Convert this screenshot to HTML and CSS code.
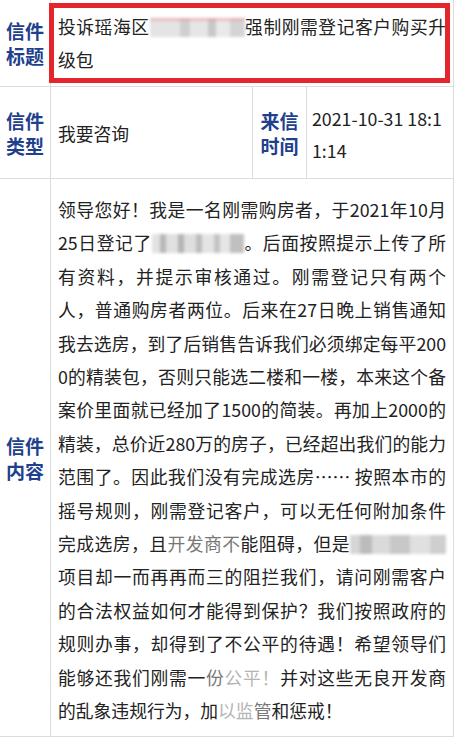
FILE: index.html
```html
<!DOCTYPE html>
<html lang="zh">
<head>
<meta charset="utf-8">
<link rel="stylesheet" href="styles.css">
</head>
<body>
<div class="letter">
  <div class="lab">信件<br>标题</div>
  <div class="cell title span3">
    <div class="mark"></div>
    <span class="ln">投诉瑶海区<span class="blur b1"></span>强制刚需登记客户购买升</span>级包
  </div>

  <div class="lab">信件<br>类型</div>
  <div class="cell mid">我要咨询</div>
  <div class="lab">来信<br>时间</div>
  <div class="cell mid date">2021-10-31 18:1<br>1:14</div>

  <div class="lab">信件<br>内容</div>
  <div class="cell body span3">
    <span class="ln">领导您好！我是一名刚需购房者，于2021年10月</span>
    <span class="ln">25日登记了<span class="blur b2"></span>。后面按照提示上传了所</span>
    <span class="ln">有资料，并提示审核通过。刚需登记只有两个</span>
    <span class="ln">人，普通购房者两位。后来在27日晚上销售通知</span>
    <span class="ln">我去选房，到了后销售告诉我们必须绑定每平200</span>
    <span class="ln">0的精装包，否则只能选二楼和一楼，本来这个备</span>
    <span class="ln">案价里面就已经加了1500的简装。再加上2000的</span>
    <span class="ln">精装，总价近280万的房子，已经超出我们的能力</span>
    <span class="ln">范围了。因此我们没有完成选房…… 按照本市的</span>
    <span class="ln">摇号规则，刚需登记客户，可以无任何附加条件</span>
    <span class="ln">完成选房，且<span class="f2">开发商不</span>能阻碍，但是<span class="blur b3"></span></span>
    <span class="ln">项目却一而再再而三的阻拦我们，请问刚需客户</span>
    <span class="ln">的合法权益如何才能得到保护？我们按照政府的</span>
    <span class="ln">规则办事，却得到了不公平的待遇！希望领导们</span>
    <span class="ln">能够还我们刚需一<span class="f2">份</span><span class="f1">公平！</span>并对这些无良开发商</span>
    <span class="last">的乱象违规行为，加<span class="f1">以监</span><span class="f2">管</span>和惩戒！</span>
  </div>
</div>
</body>
</html>
```

FILE: styles.css
```css
html, body {
  margin: 0;
  padding: 0;
  background: #ffffff;
}

body {
  font-family: "Noto Sans CJK SC", "Noto Sans", sans-serif;
  color: #222222;
  width: 455px;
  height: 737px;
  overflow: hidden;
}

.letter {
  display: grid;
  grid-template-columns: 51px 202px 54px 147px;
  grid-template-rows: 87px 92px 558px;
}

.lab,
.cell {
  box-sizing: border-box;
  border-right: 1px solid #dcdcdc;
  border-bottom: 1px solid #dcdcdc;
}

.lab {
  display: flex;
  align-items: center;
  justify-content: center;
  text-align: center;
  font-size: 19px;
  line-height: 25px;
  font-weight: bold;
  color: #213f8c;
}

.span3 {
  grid-column: span 3;
}

.cell {
  font-size: 17.8px;
  padding: 0 7px;
}

.title {
  position: relative;
  padding-top: 10px;
  line-height: 33px;
}

.mark {
  position: absolute;
  left: -2px;
  top: 3px;
  right: 3px;
  bottom: 3px;
  border: 5px solid #e4252c;
}

.mid {
  display: flex;
  align-items: center;
}

.date {
  padding-left: 5px;
  padding-right: 0;
  line-height: 32px;
  white-space: nowrap;
  display: block;
  padding-top: 15px;
}

.body {
  padding-top: 14px;
  line-height: 33.4px;
}

.ln {
  display: block;
  white-space: nowrap;
  text-align: justify;
  text-align-last: justify;
}

.last {
  display: block;
}

.blur {
  display: inline-block;
  height: 19px;
  vertical-align: -3px;
  filter: blur(1.6px);
}

.b1 {
  width: 95px;
  background:
    linear-gradient(180deg, rgba(236, 150, 160, 0.5) 0 3px, transparent 3px),
    linear-gradient(90deg, #e4e4e4 0 30px, #cfcfcf 30px 40px, #e6e6e6 40px 58px, #c8c8c8 58px 66px, #e9e9e9 66px 80px, #d4d4d4 80px 95px);
}

.b2 {
  width: 92px;
  background:
    linear-gradient(90deg, #e2e2e2 0 8px, #b8b8b8 8px 14px, #e0e0e0 14px 26px, #b4b4b4 26px 32px, #dedede 32px 44px, #bdbdbd 44px 50px, #e4e4e4 50px 62px, #c4c4c4 62px 68px, #e6e6e6 68px 78px, #c0c0c0 78px 92px);
}

.b3 {
  width: 96px;
  background:
    linear-gradient(90deg, #d6d6d6 0 10px, #bcbcbc 10px 22px, #dadada 22px 40px, #c8c8c8 40px 60px, #e0e0e0 60px 80px, #cfcfcf 80px 96px);
}

.f1 {
  color: #b4b4b4;
}

.f2 {
  color: #777777;
}
```
